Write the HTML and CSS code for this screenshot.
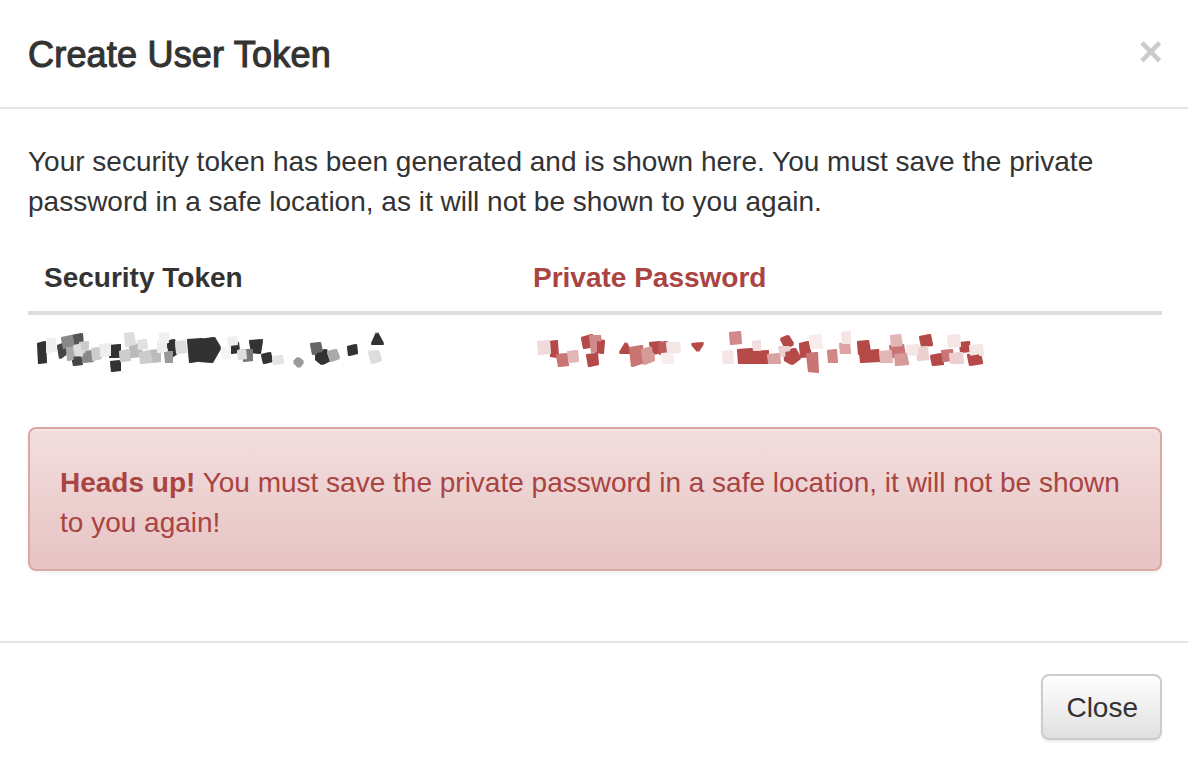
FILE: index.html
```html
<!DOCTYPE html>
<html lang="en">
<head>
<meta charset="utf-8">
<title>Create User Token</title>
<link rel="stylesheet" href="styles.css">
</head>
<body>
<svg class="defs" width="0" height="0" aria-hidden="true">
  <filter id="grow" x="-5%" y="-30%" width="110%" height="160%">
    <feMorphology operator="dilate" radius="1.3"/>
  </filter>
</svg>
<div class="modal">
  <div class="modal-header">
    <h4 class="modal-title">Create User Token</h4>
    <button class="close" type="button" aria-label="Close">&times;</button>
  </div>
  <div class="modal-body">
    <p class="intro">Your security token has been generated and is shown here. You must save the private password in a safe location, as it will not be shown to you again.</p>
    <table class="table">
      <colgroup><col class="c1"><col></colgroup>
      <thead>
        <tr><th>Security Token</th><th class="danger">Private Password</th></tr>
      </thead>
      <tbody>
        <tr>
          <td>
            <svg class="blur" width="440" height="40" viewBox="44 332 440 40" aria-label="hidden token">
             <g filter="url(#grow)">
              <polygon fill="#333" points="38,344 45,342 46,362 39,363"/>
              <polygon fill="#eee" points="47,340 55,339 56,350 47,352"/>
              <polygon fill="#444" points="58,346 66,343 68,352 60,358"/>
              <polygon fill="#888" points="62,338 72,336 74,346 64,348"/>
              <polygon fill="#555" points="72,336 82,334 83,346 74,348"/>
              <polygon fill="#aaa" points="67,348 76,347 77,358 68,360"/>
              <polygon fill="#ddd" points="74,346 84,344 85,355 76,356"/>
              <polygon fill="#444" points="72,356 80,355 82,364 74,365"/>
              <polygon fill="#888" points="82,352 92,351 93,361 83,362"/>
              <polygon fill="#ccc" points="80,343 88,342 88,350 80,351"/>
              <polygon fill="#ccc" points="92,349 100,348 101,358 93,360"/>
              <polygon fill="#eee" points="100,345 110,344 110,355 101,356"/>
              <polygon fill="#333" points="110,346 120,345 120,357 110,357"/>
              <polygon fill="#333" points="111,362 120,361 120,370 112,371"/>
              <polygon fill="#ccc" points="120,352 128,350 130,360 121,361"/>
              <polygon fill="#ddd" points="125,334 133,333 135,344 126,346"/>
              <polygon fill="#bbb" points="130,346 140,344 142,356 131,357"/>
              <polygon fill="#ccc" points="140,353 150,351 152,362 141,363"/>
              <polygon fill="#bbb" points="150,351 160,350 160,361 152,362"/>
              <polygon fill="#e2e2e2" points="138,341 146,340 147,348 139,349"/>
              <polygon fill="#f0f0f0" points="160,334 168,333 168,342 160,343"/>
              <polygon fill="#eee" points="158,342 166,342 166,351 158,352"/>
              <polygon fill="#333" points="167,342 174,340 178,352 171,357"/>
              <polygon fill="#999" points="165,352 172,352 172,362 166,362"/>
              <polygon fill="#ddd" points="176,342 185,341 186,352 177,353"/>
              <polygon fill="#333" points="188,340 202,339 202,360 190,362"/>
              <polygon fill="#333" points="200,340 214,338 220,348 212,362 200,361"/>
              <polygon fill="#f5f5f5" points="222,348 230,347 230,358 222,358"/>
              <polygon fill="#333" points="231,344 238,343 239,352 231,353"/>
              <polygon fill="#eee" points="228,338 236,337 237,344 229,345"/>
              <polygon fill="#333" points="250,341 262,340 260,353 252,352"/>
              <polygon fill="#777" points="243,350 252,350 252,360 244,361"/>
              <polygon fill="#ddd" points="238,351 245,350 246,358 239,359"/>
              <polygon fill="#333" points="262,355 270,353 272,361 264,363"/>
              <polygon fill="#e5e5e5" points="273,357 282,356 283,363 274,364"/>
              <polygon fill="#999" points="298,358 303,362 299,367 294,362"/>
              <polygon fill="#666" points="311,344 320,343 322,352 313,354"/>
              <polygon fill="#333" points="316,352 326,350 330,360 322,364 316,359"/>
              <polygon fill="#aaa" points="328,352 336,350 339,358 331,361"/>
              <polygon fill="#333" points="348,347 356,345 357,353 349,355"/>
              <polygon fill="#333" points="372,344 377,333 383,344"/>
              <polygon fill="#ddd" points="369,352 378,351 381,360 372,363"/>
             </g>
            </svg>
          </td>
          <td>
            <svg class="blur" width="460" height="40" viewBox="533 332 460 40" aria-label="hidden password">
             <g filter="url(#grow)">
              <polygon fill="#f0dada" points="538,342 549,341 550,353 539,354"/>
              <polygon fill="#b54947" points="550,342 557,341 558,357 551,356"/>
              <polygon fill="#c87473" points="557,355 567,354 568,365 559,366"/>
              <polygon fill="#e2b6b5" points="568,352 577,351 578,361 569,362"/>
              <polygon fill="#b54947" points="582,338 592,335 594,346 584,348"/>
              <polygon fill="#cf8a89" points="590,336 600,336 602,350 592,352"/>
              <polygon fill="#b54947" points="596,340 604,341 603,353 596,352"/>
              <polygon fill="#b54947" points="587,355 597,354 598,364 589,366"/>
              <polygon fill="#b54947" points="620,353 626,343 631,353"/>
              <polygon fill="#c87473" points="630,348 642,346 644,362 632,366"/>
              <polygon fill="#d69a99" points="642,350 653,347 654,360 644,364"/>
              <polygon fill="#b54947" points="650,343 660,342 662,352 652,354"/>
              <polygon fill="#c05d5b" points="659,343 667,342 668,353 660,354"/>
              <polygon fill="#f5e6e6" points="667,343 679,343 680,352 668,353"/>
              <polygon fill="#f8eded" points="662,354 672,353 673,363 663,363"/>
              <polygon fill="#b54947" points="692,344 703,343 698,351"/>
              <polygon fill="#cf8a89" points="730,333 740,332 741,343 731,344"/>
              <polygon fill="#f5e6e6" points="723,352 732,351 733,363 724,363"/>
              <polygon fill="#b54947" points="738,350 752,349 753,363 739,363"/>
              <polygon fill="#b54947" points="750,352 768,351 767,363 751,363"/>
              <polygon fill="#f2dede" points="753,342 760,341 760,350 754,350"/>
              <polygon fill="#d9a3a2" points="768,355 779,354 780,363 769,363"/>
              <polygon fill="#b54947" points="781,339 788,336 793,344 786,348"/>
              <polygon fill="#ecd0d0" points="779,347 789,347 790,355 781,356"/>
              <polygon fill="#b54947" points="784,351 795,349 800,358 792,364 785,360"/>
              <polygon fill="#b54947" points="800,344 808,342 811,356 801,357"/>
              <polygon fill="#c87473" points="807,354 817,353 818,372 809,371"/>
              <polygon fill="#f8eded" points="810,336 820,335 822,348 811,348"/>
              <polygon fill="#d08887" points="828,351 836,350 837,362 829,362"/>
              <polygon fill="#f5e6e6" points="842,333 850,332 850,343 843,343"/>
              <polygon fill="#dca3a2" points="840,344 849,343 850,353 841,353"/>
              <polygon fill="#b54947" points="858,342 868,341 870,352 859,354"/>
              <polygon fill="#b54947" points="860,352 878,350 880,361 861,362"/>
              <polygon fill="#e2b6b5" points="880,352 891,351 892,362 881,362"/>
              <polygon fill="#e2b6b5" points="891,336 900,335 902,346 892,347"/>
              <polygon fill="#c87473" points="890,346 903,345 905,356 892,357"/>
              <polygon fill="#d69a99" points="895,355 906,354 908,364 896,365"/>
              <polygon fill="#f5e6e6" points="907,346 918,345 919,354 908,355"/>
              <polygon fill="#b54947" points="920,337 930,335 932,345 922,346"/>
              <polygon fill="#eccfcf" points="917,348 927,347 928,359 918,360"/>
              <polygon fill="#b54947" points="931,356 941,354 943,364 933,365"/>
              <polygon fill="#c87473" points="942,351 952,350 953,360 943,361"/>
              <polygon fill="#f5e6e6" points="948,336 959,335 960,346 949,347"/>
              <polygon fill="#b54947" points="960,343 969,342 970,351 961,352"/>
              <polygon fill="#ecd0d0" points="950,354 962,353 963,363 951,363"/>
              <polygon fill="#f5e6e6" points="970,346 982,345 983,355 971,356"/>
              <polygon fill="#b54947" points="968,355 980,353 982,363 970,365"/>
             </g>
            </svg>
          </td>
        </tr>
      </tbody>
    </table>
    <div class="alert"><strong>Heads up!</strong> You must save the private password in a safe location, it will not be shown to you again!</div>
  </div>
  <div class="modal-footer">
    <button class="btn" type="button">Close</button>
  </div>
</div>
</body>
</html>
```

FILE: styles.css
```css
* { box-sizing: border-box; }
html, body {
  margin: 0;
  padding: 0;
  background: #fff;
}
body {
  font-family: "Liberation Sans", Arial, Helvetica, sans-serif;
  font-size: 28px;
  line-height: 40px;
  color: #333;
  overflow: hidden;
}
.defs {
  position: absolute;
  width: 0;
  height: 0;
}
.modal {
  width: 1188px;
}
.modal-header {
  display: flex;
  justify-content: space-between;
  align-items: center;
  padding: 32px 25px 29px 28px;
  border-bottom: 2px solid #e5e5e5;
}
.modal-title {
  margin: 0;
  font-size: 36px;
  line-height: 46px;
  font-weight: normal;
  -webkit-text-stroke: 1.1px #333;
  letter-spacing: 0.2px;
  color: #333;
}
.close {
  background: none;
  border: 0;
  padding: 0;
  margin: -6px 0 0 0;
  font-family: "Liberation Sans", Arial, sans-serif;
  font-size: 42px;
  font-weight: bold;
  line-height: 42px;
  color: #000;
  opacity: 0.2;
  cursor: pointer;
}
.modal-body {
  padding: 30px 26px 30px 28px;
}
.intro {
  margin: 0 0 17px 0;
  padding-top: 3px;
}
.table {
  width: 100%;
  border-collapse: collapse;
  table-layout: fixed;
  margin-bottom: 40px;
}
.c1 { width: 489px; }
.table th {
  text-align: left;
  font-weight: bold;
  padding: 19px 16px 13px;
  border-bottom: 4px solid #ddd;
  vertical-align: bottom;
}
.table th.danger { color: #a94442; }
.table td {
  padding: 17px 16px 15px;
  border-top: 4px solid #ddd;
  vertical-align: top;
}
.blur {
  display: block;
  overflow: visible;
}
.alert {
  padding: 34px 30px 26px;
  margin-bottom: 40px;
  border: 2px solid #dca7a7;
  border-radius: 8px;
  color: #a94442;
  background: linear-gradient(to bottom, #f2dede 0%, #e7c3c3 100%);
  box-shadow: inset 0 2px 0 rgba(255,255,255,.25), 0 2px 4px rgba(0,0,0,.05);
}
.alert strong { font-weight: bold; }
.modal-footer {
  display: flex;
  justify-content: flex-end;
  padding: 31px 26px 30px 28px;
  border-top: 2px solid #e5e5e5;
}
.btn {
  font-family: "Liberation Sans", Arial, sans-serif;
  font-size: 28px;
  line-height: 40px;
  color: #333;
  padding: 12px 22px 10px 23px;
  border: 2px solid #ccc;
  border-radius: 8px;
  background: linear-gradient(to bottom, #fff 0%, #e0e0e0 100%);
  box-shadow: inset 0 2px 0 rgba(255,255,255,.15), 0 2px 2px rgba(0,0,0,.075);
  cursor: pointer;
}
```
